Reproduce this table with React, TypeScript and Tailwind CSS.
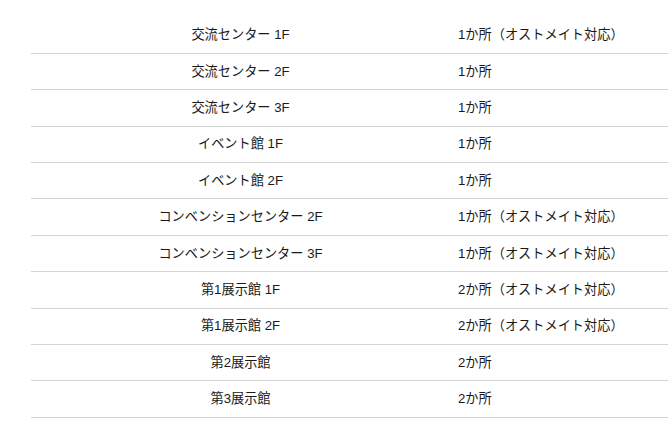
import React from "react";

const rows: [string, string][] = [
  ["交流センター 1F", "1か所（オストメイト対応）"],
  ["交流センター 2F", "1か所"],
  ["交流センター 3F", "1か所"],
  ["イベント館 1F", "1か所"],
  ["イベント館 2F", "1か所"],
  ["コンベンションセンター 2F", "1か所（オストメイト対応）"],
  ["コンベンションセンター 3F", "1か所（オストメイト対応）"],
  ["第1展示館 1F", "2か所（オストメイト対応）"],
  ["第1展示館 2F", "2か所（オストメイト対応）"],
  ["第2展示館", "2か所"],
  ["第3展示館", "2か所"],
];

export default function App() {
  return (
    <div
      className="w-[668px] h-[440px] overflow-hidden bg-white pt-[17.4px]"
      style={{ fontFamily: '"Liberation Sans", "Noto Sans CJK JP", sans-serif' }}
    >
      <div className="ml-[31px] w-[838px] text-[13.2px] text-[#1a1a1a]">
        {rows.map(([a, b], i) => (
          <div
            key={i}
            className="grid grid-cols-2 h-[36.4px] border-b border-[#d4d4d4] items-center"
          >
            <div className="text-center">{a}</div>
            <div className="pl-[8px]">{b}</div>
          </div>
        ))}
      </div>
    </div>
  );
}
